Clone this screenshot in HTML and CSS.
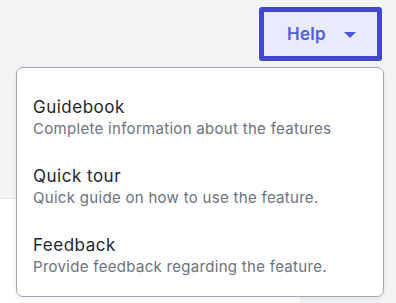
FILE: index.html
```html
<!DOCTYPE html>
<html lang="en">

<head>
    <meta charset="UTF-8">
    <meta name="viewport" content="width=device-width, initial-scale=1.0">
    <title>Help menu</title>
    <link rel="stylesheet" href="styles.css">
</head>

<body>
    <div class="page">
        <div class="topbar">
            <div class="help">
                <button class="help-btn" type="button">
                    <span>Help</span>
                    <span class="caret"></span>
                </button>
                <!-- dropdown -->
                <ul class="menu">
                    <li>
                        <a href="javascript:;">
                            <span class="title">Guidebook</span>
                            <span class="desc">Complete information about the features</span>
                        </a>
                    </li>
                    <li>
                        <a href="javascript:;">
                            <span class="title">Quick tour</span>
                            <span class="desc">Quick guide on how to use the feature.</span>
                        </a>
                    </li>
                    <li>
                        <a href="javascript:;">
                            <span class="title">Feedback</span>
                            <span class="desc">Provide feedback regarding the feature.</span>
                        </a>
                    </li>
                </ul>
            </div>
        </div>
        <div class="content"></div>
    </div>
</body>

</html>
```

FILE: styles.css
```css
* {
    padding: 0;
    margin: 0;
    box-sizing: border-box;
}

body {
    font-family: Inter, "Noto Sans", sans-serif;
    background-color: #f3f4f6;
}

.page {
    height: 303px;
    display: flex;
    flex-direction: column;
}

.topbar {
    height: 198px;
    display: flex;
    justify-content: flex-end;
    padding: 7px 14px 0 0;
}

.help {
    position: relative;
}

.help-btn {
    width: 123px;
    height: 54px;
    border: 5px solid #4347cf;
    border-radius: 3px;
    background-color: #e9eafc;
    color: #4f5edf;
    font-family: inherit;
    font-size: 17px;
    font-weight: 600;
    letter-spacing: 0.3px;
    display: flex;
    align-items: center;
    justify-content: center;
    gap: 18px;
    padding-left: 2px;
}

.caret {
    width: 0;
    height: 0;
    border-left: 6px solid transparent;
    border-right: 6px solid transparent;
    border-top: 6px solid #4a55d9;
    margin-top: 1px;
}

.menu {
    position: absolute;
    top: 60px;
    right: -2px;
    width: 368px;
    list-style: none;
    background-color: #fff;
    border: 1px solid #a0a6b2;
    border-radius: 7px;
    box-shadow: 0 2px 6px rgba(17, 24, 39, 0.08);
    padding: 16px 0 5px;
    z-index: 1;
}

.menu a {
    display: flex;
    flex-direction: column;
    gap: 4px;
    padding: 14px 16px 15px;
    text-decoration: none;
}

.title {
    font-size: 17px;
    line-height: 18px;
    letter-spacing: 0.5px;
    color: #1f2430;
}

.desc {
    font-size: 15px;
    line-height: 18px;
    letter-spacing: 0.3px;
    color: #6b7280;
}

.content {
    flex: 1;
    width: 300px;
    background-color: #fff;
    border-top: 1px solid #e2e4e9;
}
```
